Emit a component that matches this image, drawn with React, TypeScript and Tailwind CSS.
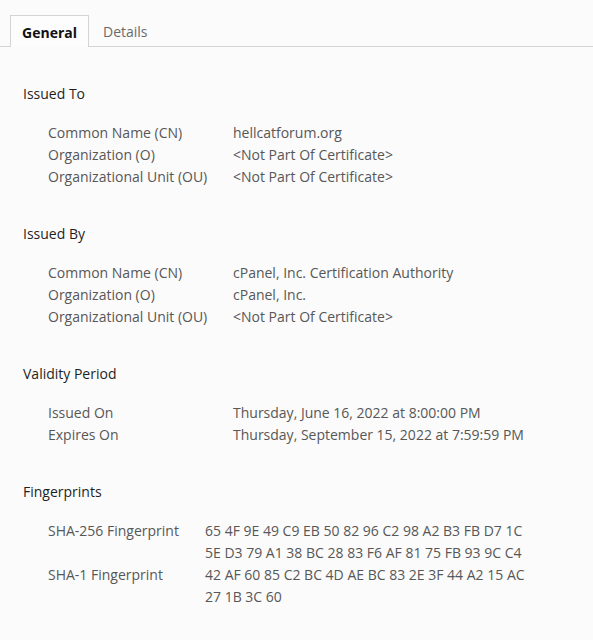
import React from "react"

type Row = { label: string; value: string[] }

const sections: { title: string; valueX: string; rows: Row[] }[] = [
  {
    title: "Issued To",
    valueX: "w-[185px]",
    rows: [
      { label: "Common Name (CN)", value: ["hellcatforum.org"] },
      { label: "Organization (O)", value: ["<Not Part Of Certificate>"] },
      { label: "Organizational Unit (OU)", value: ["<Not Part Of Certificate>"] },
    ],
  },
  {
    title: "Issued By",
    valueX: "w-[185px]",
    rows: [
      { label: "Common Name (CN)", value: ["cPanel, Inc. Certification Authority"] },
      { label: "Organization (O)", value: ["cPanel, Inc."] },
      { label: "Organizational Unit (OU)", value: ["<Not Part Of Certificate>"] },
    ],
  },
  {
    title: "Validity Period",
    valueX: "w-[185px]",
    rows: [
      { label: "Issued On", value: ["Thursday, June 16, 2022 at 8:00:00 PM"] },
      { label: "Expires On", value: ["Thursday, September 15, 2022 at 7:59:59 PM"] },
    ],
  },
  {
    title: "Fingerprints",
    valueX: "w-[157px]",
    rows: [
      {
        label: "SHA-256 Fingerprint",
        value: ["65 4F 9E 49 C9 EB 50 82 96 C2 98 A2 B3 FB D7 1C", "5E D3 79 A1 38 BC 28 83 F6 AF 81 75 FB 93 9C C4"],
      },
      {
        label: "SHA-1 Fingerprint",
        value: ["42 AF 60 85 C2 BC 4D AE BC 83 2E 3F 44 A2 15 AC", "27 1B 3C 60"],
      },
    ],
  },
]

export default function App() {
  return (
    <div
      className="w-[593px] h-[640px] bg-[#fbfbfb] text-[14px] overflow-hidden"
      style={{ fontFamily: '"Open Sans", "Noto Sans", sans-serif' }}
    >
      {/* tab strip */}
      <div className="flex pt-[15px] pl-[10px] border-b border-[#d4d4d4]">
        <div className="h-[32px] w-[79px] -mb-px pt-px bg-[#fdfdfd] border border-b-0 border-[#d4d4d4] flex items-center justify-center font-bold text-[#111111]">
          General
        </div>
        <div className="h-[31px] pt-[2px] px-[14px] flex items-center text-[#6a6a6a]">Details</div>
      </div>

      <div className="pl-[23px] pt-[36px]">
        {sections.map((s) => (
          <div key={s.title} className="mb-[35px]">
            <div className="text-[#1f1f1f] leading-[22px]">{s.title}</div>
            <div className="pl-[25px] pt-[17px]">
              {s.rows.map((r) => (
                <div key={r.label} className="flex leading-[22px] text-[#575757]">
                  <div className={s.valueX + " shrink-0"}>{r.label}</div>
                  <div>
                    {r.value.map((v) => (
                      <div key={v} className="whitespace-nowrap">{v}</div>
                    ))}
                  </div>
                </div>
              ))}
            </div>
          </div>
        ))}
      </div>
    </div>
  )
}
